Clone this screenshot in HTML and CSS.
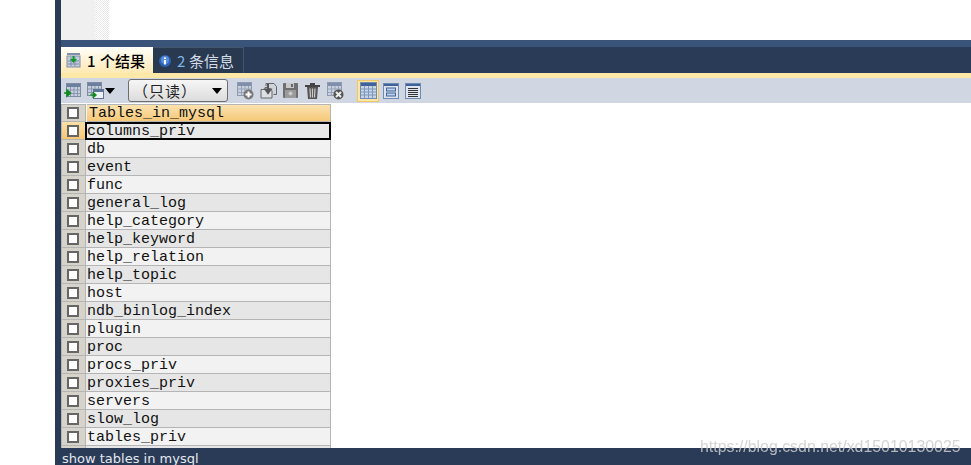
FILE: index.html
```html
<!DOCTYPE html>
<html lang="zh">
<head>
<meta charset="utf-8">
<title>SQLyog</title>
<link rel="stylesheet" href="styles.css">
</head>
<body>
<svg class="defs" width="0" height="0">
  <defs>
    <g id="grid-sm">
      <rect x="0.5" y="0.5" width="14" height="13" fill="#c8cfdc" stroke="#7f8ba3"/>
      <rect x="1" y="1" width="13" height="3" fill="#6d7f9f"/>
      <path d="M1 7h13M1 10.500h13M4.500 4v9M8 4v9M11.500 4v9" stroke="#8a97b0" fill="none"/>
    </g>
  </defs>
</svg>
<div class="app">
  <div class="editor"><div class="margin"></div><div class="dither"></div><div class="blank"></div></div>
  <div class="band"></div>
  <div class="tabs">
    <div class="tab active">
      <svg class="tabicon" width="16" height="16" viewBox="0 0 16 16"><rect x="1" y="4" width="13" height="11" fill="#c4cee0" stroke="#7f8ba3"/><rect x="1" y="1" width="13" height="2" fill="#7f90ad"/><path d="M2 9h11M2 12h11M5 5v9M9 5v9" stroke="#7f8ba3"/><path d="M7.500 4v4" stroke="#0b9a24" stroke-width="2"/><path d="M4 7l3.500 4L11 7z" fill="#0b9a24"/></svg>
      <span class="num">1</span><span>个结果</span>
    </div>
    <div class="tab">
      <svg class="tabicon" width="14" height="14" viewBox="0 0 14 14"><circle cx="7" cy="7" r="6" fill="#2b62b5"/><circle cx="7" cy="6" r="4" fill="#5a8fdb"/><rect x="6" y="6" width="2" height="4.500" fill="#fff"/><rect x="6" y="3.500" width="2" height="1.500" fill="#fff"/></svg>
      <span class="num">2</span><span>条信息</span>
    </div>
  </div>
  <div class="accent"></div>
  <div class="toolbar">
    <svg class="ico first" width="17" height="17" viewBox="0 0 17 17"><use href="#grid-sm" x="2" y="1"/><path d="M0 11h4M3 8l3.500 3L3 14z" fill="#0d8a1e" stroke="#0d8a1e" stroke-width="1.500"/></svg>
    <svg class="ico second" width="18" height="18" viewBox="0 0 18 18"><use href="#grid-sm" x="0" y="0"/><rect x="6.500" y="7.500" width="10" height="9" fill="#eef1f6" stroke="#5f7498"/><rect x="7" y="8" width="9" height="2" fill="#5f7498"/><path d="M3 13h4M6 10l3.500 3L6 16z" fill="#0d8a1e" stroke="#0d8a1e"/></svg>
    <span class="caret small"></span>
    <div class="select"><span class="select-label">（只读）</span><span class="caret"></span></div>
    <svg class="ico first-b" width="17" height="18" viewBox="0 0 17 18"><use href="#grid-sm" x="0" y="0" opacity=".8"/><circle cx="11.500" cy="12.500" r="5" fill="#777"/><path d="M8.500 12.500h6M11.500 9.500v6" stroke="#fff" stroke-width="2"/></svg>
    <svg class="ico" width="17" height="18" viewBox="0 0 17 18"><path d="M6 4V1.500h8l2.500 3v8h-3" fill="#cfd3da" stroke="#666"/><path d="M1 7.500h4v-2h3l4 3V16H1z" fill="#dcdfe4" stroke="#666"/><path d="M8 2v6M5.500 7.500L8 11l2.500-3.500z" fill="#555" stroke="#555" stroke-width="2"/></svg>
    <svg class="ico wide" width="15" height="15" viewBox="0 0 15 15"><rect width="15" height="15" rx="1" fill="#6f6f6f"/><rect x="3" y="0" width="8" height="5" fill="#c9c9c9"/><rect x="8" y="1" width="2" height="3" fill="#666"/><rect x="2" y="7" width="11" height="8" fill="#9a9a9a"/><circle cx="7.500" cy="10.500" r="2" fill="#c9c9c9"/></svg>
    <svg class="ico wide" width="15" height="17" viewBox="0 0 15 17"><path d="M0 3h15v2H0zM5 1h5v2H5z" fill="#444"/><path d="M2 5h11l-1 12H3z" fill="#555"/><path d="M5 6.500l.5 9M7.500 6.500v9M10 6.500l-.5 9" stroke="#ccc" stroke-width="1.200"/></svg>
    <svg class="ico" width="17" height="18" viewBox="0 0 17 18"><use href="#grid-sm" x="0" y="0" opacity=".8"/><circle cx="11.500" cy="12.500" r="5" fill="#555"/><path d="M9 10l5 5M14 10l-5 5" stroke="#eee" stroke-width="2"/></svg>
    <div class="view on"><svg width="17" height="17" viewBox="0 0 17 17"><rect x=".5" y=".5" width="16" height="16" fill="#c9d4e6" stroke="#6f8ab4"/><rect x="1" y="1" width="15" height="3" fill="#3f6397"/><path d="M1 7h15M1 10h15M1 13h15M4.500 4v12M8.500 4v12M12.500 4v12" stroke="#7d96bd"/></svg></div>
    <div class="view"><svg width="16" height="16" viewBox="0 0 16 16"><rect x=".5" y=".5" width="15" height="15" fill="#dde4ef" stroke="#6f8ab4"/><rect x="1" y="1" width="14" height="2" fill="#3f6397"/><rect x="3.500" y="5" width="9" height="3" fill="#bcd0ea" stroke="#3f6397"/><rect x="3.500" y="10" width="9" height="3" fill="#bcd0ea" stroke="#3f6397"/></svg></div>
    <div class="view"><svg width="16" height="16" viewBox="0 0 16 16"><rect x=".5" y=".5" width="15" height="15" fill="#dde4ef" stroke="#6f8ab4"/><rect x="1" y="1" width="14" height="2" fill="#3f6397"/><path d="M3 5.500h10M3 7.500h10M3 9.500h10M3 11.500h10M3 13.500h10" stroke="#333"/></svg></div>
  </div>
  <div class="grid">
    <div class="table">
      <div class="row head"><div class="gutter"><span class="check"></span></div><div class="cell">Tables_in_mysql</div></div>
      <div class="row selected"><div class="gutter"><span class="check"></span></div><div class="cell">columns_priv</div></div>
      <div class="row"><div class="gutter"><span class="check"></span></div><div class="cell">db</div></div>
      <div class="row alt"><div class="gutter"><span class="check"></span></div><div class="cell">event</div></div>
      <div class="row"><div class="gutter"><span class="check"></span></div><div class="cell">func</div></div>
      <div class="row alt"><div class="gutter"><span class="check"></span></div><div class="cell">general_log</div></div>
      <div class="row"><div class="gutter"><span class="check"></span></div><div class="cell">help_category</div></div>
      <div class="row alt"><div class="gutter"><span class="check"></span></div><div class="cell">help_keyword</div></div>
      <div class="row"><div class="gutter"><span class="check"></span></div><div class="cell">help_relation</div></div>
      <div class="row alt"><div class="gutter"><span class="check"></span></div><div class="cell">help_topic</div></div>
      <div class="row"><div class="gutter"><span class="check"></span></div><div class="cell">host</div></div>
      <div class="row alt"><div class="gutter"><span class="check"></span></div><div class="cell">ndb_binlog_index</div></div>
      <div class="row"><div class="gutter"><span class="check"></span></div><div class="cell">plugin</div></div>
      <div class="row alt"><div class="gutter"><span class="check"></span></div><div class="cell">proc</div></div>
      <div class="row"><div class="gutter"><span class="check"></span></div><div class="cell">procs_priv</div></div>
      <div class="row alt"><div class="gutter"><span class="check"></span></div><div class="cell">proxies_priv</div></div>
      <div class="row"><div class="gutter"><span class="check"></span></div><div class="cell">servers</div></div>
      <div class="row alt"><div class="gutter"><span class="check"></span></div><div class="cell">slow_log</div></div>
      <div class="row"><div class="gutter"><span class="check"></span></div><div class="cell">tables_priv</div></div>
      <div class="row alt"><div class="gutter"></div><div class="cell"></div></div>
    </div>
  </div>
  <div class="status">show tables in mysql</div>
</div>
<div class="watermark">https://blog.csdn.net/xd15010130025</div>
</body>
</html>
```
FILE: styles.css
```css
* { box-sizing: border-box; }
html, body { margin: 0; height: 465px; overflow: hidden; background: #fff; }
body { padding-left: 55px; font-family: "Liberation Sans", sans-serif; position: relative; }
.defs { position: absolute; }
.app { height: 465px; border-left: 6px solid #2a3b58; display: flex; flex-direction: column; }
.editor { height: 40px; display: flex; background: #fff; }
.margin { width: 34px; background: #f0f0f0; }
.dither { width: 14px; background: repeating-conic-gradient(#e8e8e8 0 25%, #fff 0 50%) 0 0 / 2px 2px; }
.blank { flex: 1; }
.band { height: 7px; background: #3a5378; }
.tabs { height: 26px; background: #2a3b58; display: flex; }
.tab { width: 91px; display: flex; align-items: center; gap: 5px; padding-left: 5px; font: 15px "Noto Sans CJK SC", sans-serif; color: #d5dde8; background: #29394f; border: 1px solid #43546e; border-bottom: 0; border-left: 0; }
.tab.active { width: 92px; color: #000; font-weight: 500; gap: 5px; background: linear-gradient(#fffef8, #ffe9b4); border: 0; }
.tabicon { flex: none; }
.num { margin-right: -1px; width: 9px; }
.active .num { color: #000; }
.tab:not(.active) .num { color: #7fb4ea; margin-right: -2px; }
.accent { height: 5px; background: #fee8a8; }
.toolbar { height: 25px; background: #d0d7e3; display: flex; align-items: center; padding-left: 3px; }
.ico { flex: none; margin-right: 6px; }
.ico.first { margin-right: 6px; }
.ico.second { margin-right: 0; }
.ico.wide { margin-right: 7px; }
.caret { width: 0; height: 0; border: 5px solid transparent; border-top: 6px solid #000; border-bottom: 0; }
.caret.small { margin-right: 13px; margin-left: 0; }
.select { width: 100px; height: 23px; border: 1px solid #6e6e6e; border-radius: 3px; background: linear-gradient(#f6f6f6, #dcdcdc); display: flex; align-items: center; justify-content: space-between; padding: 0 5px 0 4px; font: 15px "Noto Sans CJK SC", sans-serif; color: #222; }
.select-label { white-space: nowrap; letter-spacing: 1px; }
.ico.first-b { margin-left: 9px; }
.view { width: 22px; height: 22px; display: flex; align-items: center; justify-content: center; }
.view.on { background: #fde6a4; border: 1px solid #f0c96a; margin-left: 7px; margin-right: 1px; }
.grid { flex: 1; min-height: 0; background: #fff; overflow: hidden; padding-top: 1px; }
.table { width: 270px; }
.row { height: 18px; display: flex; background: #f2f2f2; }
.row.alt { background: #e6e6e6; }
.gutter { width: 25px; flex: none; background: #d6d3cb; border: 1px solid #b5b5b5; border-top: 0; display: flex; align-items: center; justify-content: center; padding-right: 2px; }
.check { width: 12px; height: 12px; background: #fff; border: 2px solid #666; }
.cell { flex: 1; font: 15px/19px "Liberation Mono", monospace; color: #111; padding-left: 1px; border-right: 1px solid #b5b5b5; border-bottom: 1px solid #b5b5b5; }
.head .gutter { border-top: 1px solid #b5b5b5; }
.head .cell { margin-left: 1px; padding-left: 2px; background: linear-gradient(#fbe2b0, #f5c878); border: 1px solid #b5b5b5; border-left: 0; line-height: 18px; }
.selected .gutter { background: linear-gradient(#fde0a6, #f5c674); }
.selected .cell { border: 2px solid #000; background: #e8e8e8; margin-left: -1px; padding-left: 0; line-height: 16px; }
.status { height: 17px; background: #2a3b58; color: #e4e8ee; font: 13px/21px "DejaVu Sans", sans-serif; padding-left: 1px; white-space: nowrap; overflow: hidden; flex: none; }
.watermark { position: absolute; left: 700px; top: 437px; font-size: 15.900px; line-height: 20px; color: rgba(205, 205, 205, .85); white-space: nowrap; filter: blur(.4px); }
```
